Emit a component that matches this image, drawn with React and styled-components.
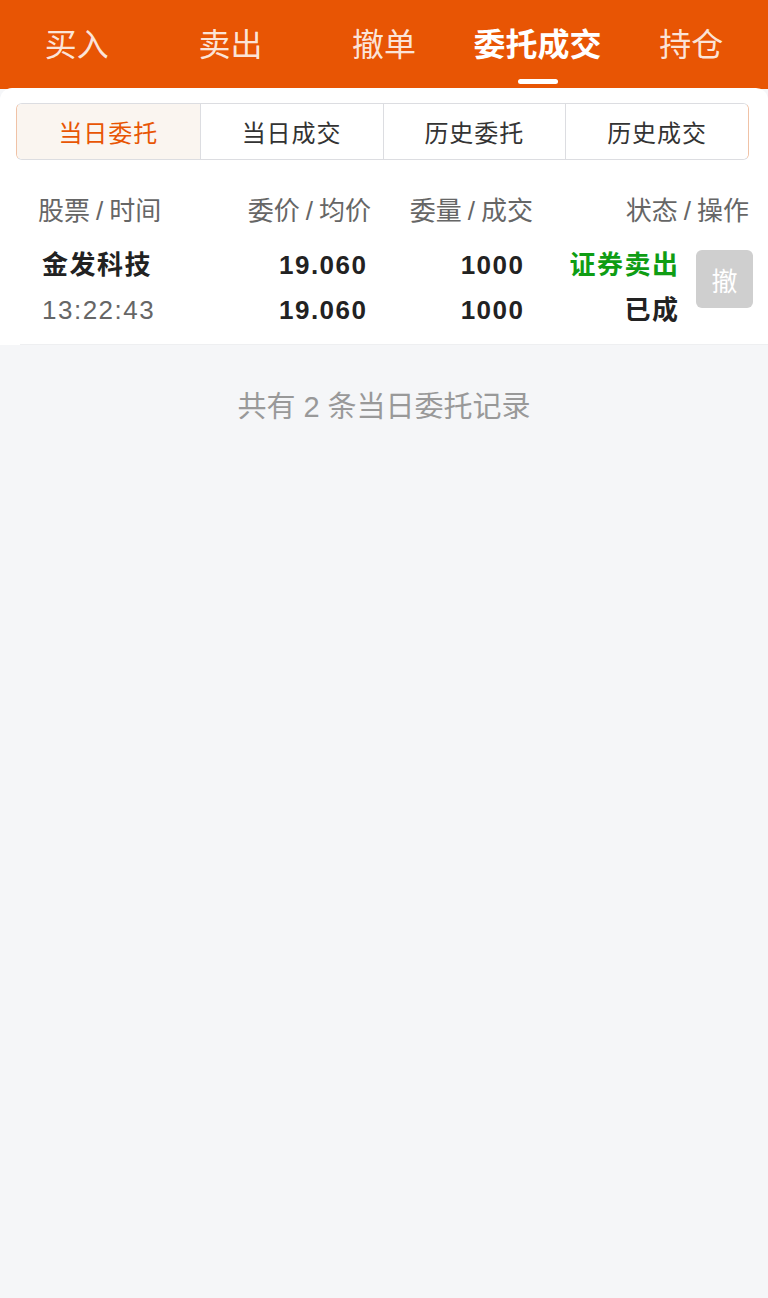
import React, { useState } from "react";
import styled, { createGlobalStyle } from "styled-components";

const GlobalStyle = createGlobalStyle`
  html, body {
    margin: 0;
    padding: 0;
    background: #f5f6f8;
    font-family: "Liberation Sans", "Noto Sans CJK SC", sans-serif;
  }
`;

const Page = styled.div`
  min-height: 1298px;
  background: #f5f6f8;
`;

const Header = styled.div`
  background: #e85504;
`;

const TopTabs = styled.div`
  display: grid;
  grid-template-columns: repeat(5, 1fr);
  height: 89px;
`;

const TopTab = styled.div`
  position: relative;
  display: flex;
  justify-content: center;
  padding-top: 24px;
  font-size: 32px;
  line-height: 42px;
  color: ${(p) => (p.$active ? "#fff" : "rgba(255,255,255,0.86)")};
  font-weight: ${(p) => (p.$active ? 700 : 400)};

  &::after {
    content: "";
    display: ${(p) => (p.$active ? "block" : "none")};
    position: absolute;
    left: 50%;
    top: 79px;
    width: 40px;
    height: 5px;
    margin-left: -20px;
    border-radius: 3px;
    background: #fff;
  }
`;

const Card = styled.div`
  background: #fff;
  border-radius: 12px 12px 0 0;
  margin-top: -1px;
  padding: 15px 19px 0 16px;
`;

const Segments = styled.div`
  display: grid;
  grid-template-columns: repeat(4, 1fr);
  height: 55px;
  border: 1px solid #dcdde1;
  border-left-color: #f0c2a6;
  border-right-color: #f0c2a6;
  border-radius: 6px;
  overflow: hidden;
`;

const Segment = styled.div`
  display: flex;
  align-items: center;
  justify-content: center;
  font-size: 24px;
  letter-spacing: 1px;
  color: ${(p) => (p.$active ? "#e85504" : "#333")};
  background: ${(p) => (p.$active ? "#faf5f0" : "#fff")};
  border-left: ${(p) => (p.$first ? "none" : "1px solid #dcdde1")};
`;

const HeadRow = styled.div`
  display: grid;
  grid-template-columns: 180px 153px 162px 1fr;
  align-items: center;
  padding: 30px 0 0 22px;
  height: 37px;
`;

const HeadCell = styled.div`
  font-size: 26px;
  color: #666;
  text-align: ${(p) => (p.$left ? "left" : "right")};
  white-space: nowrap;
`;

const Slash = styled.span`
  padding: 0 6px;
`;

const DataRow = styled.div`
  display: grid;
  grid-template-columns: 150px 174px 157px 155px 1fr;
  align-items: start;
  padding: 21px 0 0 26px;
  height: 96px;
  margin-right: -19px;
`;

const Stack = styled.div`
  display: flex;
  flex-direction: column;
  gap: 10px;
  align-items: ${(p) => (p.$left ? "flex-start" : "flex-end")};
`;

const Cell = styled.div`
  font-size: 26px;
  line-height: 35px;
  letter-spacing: 1.5px;
  font-weight: ${(p) => (p.$light ? 400 : 700)};
  color: ${(p) => p.$color || "#222"};
  white-space: nowrap;
  margin-right: -1.5px;
`;

const CancelButton = styled.div`
  margin: 2px 0 0 18px;
  width: 57px;
  height: 58px;
  border-radius: 6px;
  background: #cfcfcf;
  color: #fff;
  font-size: 26px;
  display: flex;
  align-items: center;
  justify-content: center;
`;

const Divider = styled.div`
  height: 1px;
  background: #eeeff1;
  margin: 0 -19px 0 4px;
`;

const Footer = styled.div`
  text-align: center;
  padding-top: 38px;
  font-size: 29px;
  color: #999;
`;

const tabs = ["买入", "卖出", "撤单", "委托成交", "持仓"];
const segments = ["当日委托", "当日成交", "历史委托", "历史成交"];
const heads = [
  ["股票", "时间"],
  ["委价", "均价"],
  ["委量", "成交"],
  ["状态", "操作"],
];

export default function App() {
  const [tab] = useState(3);
  const [seg, setSeg] = useState(0);

  return (
    <Page>
      <GlobalStyle />
      <Header>
        <TopTabs>
          {tabs.map((t, i) => (
            <TopTab key={t} $active={i === tab}>
              {t}
            </TopTab>
          ))}
        </TopTabs>
      </Header>
      <Card>
        <Segments>
          {segments.map((s, i) => (
            <Segment
              key={s}
              $first={i === 0}
              $active={i === seg}
              onClick={() => setSeg(i)}
            >
              {s}
            </Segment>
          ))}
        </Segments>
        <HeadRow>
          {heads.map(([a, b], i) => (
            <HeadCell key={a} $left={i === 0}>
              {a}
              <Slash>/</Slash>
              {b}
            </HeadCell>
          ))}
        </HeadRow>
        <DataRow>
          <Stack $left>
            <Cell>金发科技</Cell>
            <Cell $light $color="#666">13:22:43</Cell>
          </Stack>
          <Stack>
            <Cell>19.060</Cell>
            <Cell>19.060</Cell>
          </Stack>
          <Stack>
            <Cell>1000</Cell>
            <Cell>1000</Cell>
          </Stack>
          <Stack>
            <Cell $color="#0f9d14">证券卖出</Cell>
            <Cell>已成</Cell>
          </Stack>
          <CancelButton>撤</CancelButton>
        </DataRow>
        <Divider />
      </Card>
      <Footer>共有 2 条当日委托记录</Footer>
    </Page>
  );
}
